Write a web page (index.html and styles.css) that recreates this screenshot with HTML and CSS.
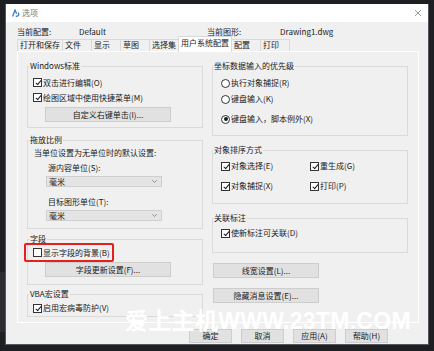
FILE: index.html
```html
<!DOCTYPE html>
<html lang="zh-CN">
<head>
    <meta charset="UTF-8">
    <meta name="viewport" content="width=device-width, initial-scale=1.0">
    <title>选项</title>
    <link rel="stylesheet" href="styles.css">
</head>
<body>
<div class="desk">
    <div class="side-band"></div>

    <div class="dialog">
        <div class="titlebar">
            <svg class="app-icon" viewBox="0 0 8 8">
                <path d="M0.6 7.4 L3 1 L4.6 4.8" fill="none" stroke="#2f7fd8" stroke-width="1.3"/>
                <path d="M3.8 7.4 C6 7.4 7.6 6 6.2 3.6" fill="none" stroke="#2f7fd8" stroke-width="1.3"/>
            </svg>
            <span class="title">选项</span>
            <svg class="close" viewBox="0 0 6 6">
                <path d="M0 0 L6 6 M6 0 L0 6" stroke="#808080" stroke-width="0.8"/>
            </svg>
        </div>

        <div class="content">
            <div class="profile">
                <span class="key-a">当前配置:</span>
                <span class="val-a">Default</span>
                <span class="key-b">当前图形:</span>
                <span>Drawing1.dwg</span>
            </div>

            <div class="tabs">
                <span class="tab">打开和保存</span>
                <span class="tab">文件</span>
                <span class="tab">显示</span>
                <span class="tab">草图</span>
                <span class="tab">选择集</span>
                <span class="tab active">用户系统配置</span>
                <span class="tab">配置</span>
                <span class="tab">打印</span>
            </div>

            <div class="panel">
                <!-- left column -->
                <div class="col col-left">
                    <fieldset class="group g-win">
                        <legend>Windows标准</legend>
                        <label class="row"><span class="cb on"></span>双击进行编辑(O)</label>
                        <label class="row"><span class="cb on"></span>绘图区域中使用快捷菜单(M)</label>
                        <button class="btn btn-wide">自定义右键单击(I)...</button>
                    </fieldset>

                    <fieldset class="group g-drag">
                        <legend>拖放比例</legend>
                        <p class="note">当单位设置为无单位时的默认设置:</p>
                        <p class="unit-label">源内容单位(S):</p>
                        <div class="select">毫米<svg class="caret" viewBox="0 0 5 3"><path d="M0.3 0.3 L2.5 2.5 L4.7 0.3" fill="none" stroke="#777" stroke-width="0.8"/></svg></div>
                        <p class="unit-label second">目标图形单位(T):</p>
                        <div class="select">毫米<svg class="caret" viewBox="0 0 5 3"><path d="M0.3 0.3 L2.5 2.5 L4.7 0.3" fill="none" stroke="#777" stroke-width="0.8"/></svg></div>
                    </fieldset>

                    <fieldset class="group g-field">
                        <legend>字段</legend>
                        <label class="row mark"><span class="cb"></span>显示字段的背景(B)</label>
                        <button class="btn btn-wide">字段更新设置(F)...</button>
                    </fieldset>

                    <fieldset class="group g-vba">
                        <legend>VBA宏设置</legend>
                        <label class="row"><span class="cb on"></span>启用宏病毒防护(V)</label>
                    </fieldset>
                </div>

                <!-- right column -->
                <div class="col col-right">
                    <fieldset class="group g-coord">
                        <legend>坐标数据输入的优先级</legend>
                        <label class="row tall"><span class="rb"></span>执行对象捕捉(R)</label>
                        <label class="row tall"><span class="rb"></span>键盘输入(K)</label>
                        <label class="row tall spaced"><span class="rb on"></span>键盘输入，脚本例外(X)</label>
                    </fieldset>

                    <fieldset class="group g-sort">
                        <legend>对象排序方式</legend>
                        <div class="sort-grid">
                            <label class="row tall"><span class="cb on"></span>对象选择(E)</label>
                            <label class="row tall"><span class="cb on"></span>重生成(G)</label>
                            <label class="row tall"><span class="cb on"></span>对象捕捉(X)</label>
                            <label class="row tall"><span class="cb on"></span>打印(P)</label>
                        </div>
                    </fieldset>

                    <fieldset class="group g-assoc">
                        <legend>关联标注</legend>
                        <label class="row"><span class="cb on"></span>使新标注可关联(D)</label>
                    </fieldset>

                    <button class="btn btn-side">线宽设置(L)...</button>
                    <button class="btn btn-side">隐藏消息设置(E)...</button>
                </div>
            </div>

            <div class="footer">
                <button class="btn btn-foot">确定</button>
                <button class="btn btn-foot">取消</button>
                <button class="btn btn-foot">应用(A)</button>
                <button class="btn btn-foot">帮助(H)</button>
            </div>
        </div>
    </div>

    <div class="watermark">爱上主机<span class="wm-latin">WWW.23TM.COM</span></div>
</div>
</body>
</html>
```

FILE: styles.css
```css
/* Reset */
* {
    margin: 0;
    padding: 0;
    box-sizing: border-box;
}

body {
    width: 434px;
    height: 351px;
    overflow: hidden;
    background-color: #1e1f22;
    font-family: "Noto Sans CJK SC", sans-serif;
    font-size: 8px;
    line-height: 10px;
    color: #1a1a1a;
}

.desk {
    position: relative;
    width: 434px;
    height: 351px;
}

.side-band {
    position: absolute;
    left: 0;
    top: 272px;
    width: 5px;
    height: 60px;
    background-color: #2b2d31;
}

/* Dialog window */
.dialog {
    position: absolute;
    left: 5px;
    top: 4px;
    width: 424px;
    height: 341px;
    background-color: #f0f0f0;
    border: 1px solid #55575c;
    border-top: none;
    display: flex;
    flex-direction: column;
}

.titlebar {
    height: 18px;
    background-color: #fff;
    display: flex;
    align-items: center;
    padding: 0 7px 0 6px;
}

.app-icon {
    width: 8px;
    height: 8px;
    margin-right: 2px;
}

.title {
    color: #7a7a7a;
}

.close {
    margin-left: auto;
    width: 6px;
    height: 6px;
}

.content {
    flex: 1;
    display: flex;
    flex-direction: column;
    padding: 0 9px 0 11px;
}

.profile {
    display: flex;
    padding-top: 5px;
    height: 15px;
}

.key-a {
    width: 62px;
}

.val-a {
    width: 128px;
}

.key-b {
    width: 73px;
}

/* Tabs */
.tabs {
    display: flex;
    height: 12px;
    margin-top: 2px;
}

.tab {
    min-width: 30px;
    padding: 0 2px;
    border: 1px solid #d9d9d9;
    border-bottom: none;
    margin-right: -1px;
    background-color: #f0f0f0;
}

.tab.active {
    position: relative;
    z-index: 1;
    background-color: #fff;
    margin: -3px -1px -1px 0;
    padding-top: 1px;
}

.panel {
    height: 272px;
    border: 1px solid #fff;
    display: flex;
    gap: 9px;
    padding: 9px 0 0 9px;
}

.col {
    display: flex;
    flex-direction: column;
}

.col-left {
    width: 176px;
}

.col-right {
    width: 196px;
}

/* Group boxes */
.group {
    border: 1px solid #dadada;
    min-width: 0;
    padding: 4px 5px 5px;
}

.group legend {
    padding: 0 1px;
    margin-left: -4px;
    line-height: 10px;
}

.col-right .group {
    padding-left: 8px;
}

.col-right .group legend {
    margin-left: -8px;
}

.g-drag {
    margin-top: 7px;
    padding-top: 3px;
    padding-bottom: 7px;
}

.g-field {
    margin-top: 5px;
    padding-top: 0;
    padding-bottom: 7px;
}

.g-vba {
    margin-top: 4px;
    padding-top: 2px;
    padding-bottom: 1px;
}

.g-vba .row {
    height: 14px;
}

.g-coord {
    padding-bottom: 8px;
}

.g-sort {
    margin-top: 9px;
    padding-top: 3px;
    padding-bottom: 9px;
}

.g-assoc {
    margin-top: 9px;
    padding-top: 3px;
    padding-bottom: 12px;
}

.g-assoc .row {
    height: 14px;
}

.sort-grid {
    display: grid;
    grid-template-columns: 89px 1fr;
    row-gap: 4px;
}

/* Rows, checkboxes, radios */
.row {
    display: flex;
    align-items: center;
    height: 15px;
}

.row.tall {
    height: 16px;
}

.row.spaced {
    margin-top: 4px;
}

.cb {
    position: relative;
    flex: none;
    width: 9px;
    height: 9px;
    margin-right: 1px;
    border: 1px solid #333;
    background-color: #fff;
}

.cb.on::after {
    content: "";
    position: absolute;
    left: 2.5px;
    top: 0;
    width: 2px;
    height: 5px;
    border: solid #1a1a1a;
    border-width: 0 1px 1px 0;
    transform: rotate(40deg);
}

.rb {
    position: relative;
    flex: none;
    width: 9px;
    height: 9px;
    margin-right: 1px;
    border: 1px solid #333;
    border-radius: 50%;
    background-color: #fff;
}

.rb.on::after {
    content: "";
    position: absolute;
    left: 1.5px;
    top: 1.5px;
    width: 4px;
    height: 4px;
    border-radius: 50%;
    background-color: #1a1a1a;
}

.mark {
    width: 90px;
    height: 19px;
    margin: -1px 0 0 -9px;
    padding-left: 7px;
    border: 2px solid #e4201d;
    border-radius: 2px;
}

/* Unit selectors */
.note {
    margin-left: 1px;
}

.unit-label {
    margin: 5px 0 0 15px;
}

.unit-label.second {
    margin-top: 10px;
}

.select {
    display: flex;
    align-items: center;
    width: 116px;
    height: 11px;
    margin: 3px 0 0 13px;
    padding-left: 2px;
    background-color: #e4e4e4;
    border: 1px solid #cfcfcf;
}

.caret {
    width: 5px;
    height: 3px;
    margin-left: auto;
    margin-right: 4px;
}

/* Buttons */
.btn {
    display: flex;
    align-items: center;
    justify-content: center;
    height: 15px;
    font: inherit;
    color: inherit;
    background-color: #e1e1e1;
    border: 1px solid #cdcdcd;
}

.btn-wide {
    width: 126px;
    margin: 2px 0 0 12px;
}

.g-field .btn-wide {
    margin-top: 0;
}

.btn-side {
    width: 106px;
    margin: 10px 0 0 1px;
}

.footer {
    display: flex;
    justify-content: flex-end;
    gap: 9px;
    margin-top: 6px;
    padding-right: 31px;
}

.btn-foot {
    width: 43px;
    height: 14px;
}

/* Site watermark */
.watermark {
    position: absolute;
    left: 125px;
    top: 307px;
    font-family: "Noto Sans CJK SC", sans-serif;
    font-size: 23px;
    line-height: 24px;
    font-weight: 700;
    color: #fff;
    letter-spacing: 0.3px;
    white-space: nowrap;
}

.wm-latin {
    font-family: "Liberation Sans", sans-serif;
}
```
